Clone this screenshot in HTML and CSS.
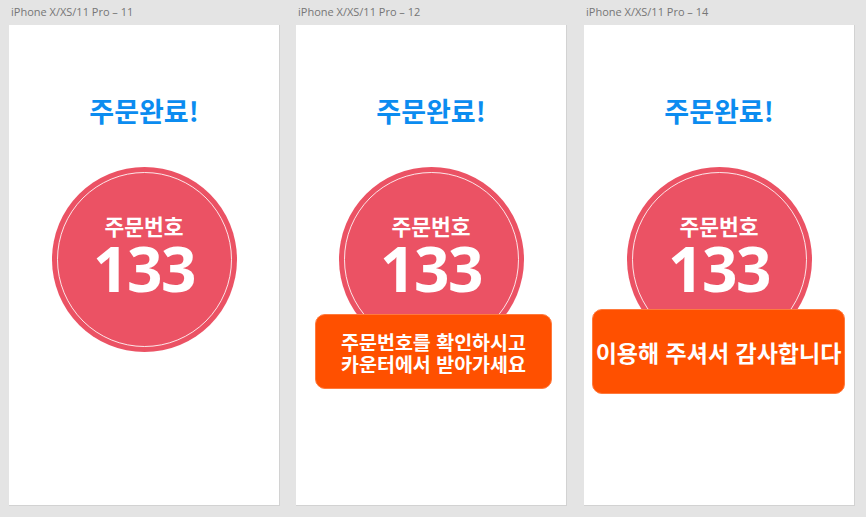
FILE: index.html
```html
<!DOCTYPE html>
<html lang="ko">
<head>
<meta charset="utf-8">
<title>주문완료</title>
<link rel="stylesheet" href="styles.css">
</head>
<body>
<div class="canvas">
  <section class="board">
    <div class="board-label">iPhone X/XS/11 Pro – 11</div>
    <div class="screen">
      <h1 class="title">주문완료!</h1>
      <div class="ticket">
        <div class="ticket-label">주문번호</div>
        <div class="ticket-number">133</div>
      </div>
    </div>
  </section>
  <section class="board">
    <div class="board-label">iPhone X/XS/11 Pro – 12</div>
    <div class="screen">
      <h1 class="title">주문완료!</h1>
      <div class="ticket">
        <div class="ticket-label">주문번호</div>
        <div class="ticket-number">133</div>
      </div>
      <div class="toast toast-info">주문번호를 확인하시고<br>카운터에서 받아가세요</div>
    </div>
  </section>
  <section class="board board-last">
    <div class="board-label">iPhone X/XS/11 Pro – 14</div>
    <div class="screen">
      <h1 class="title">주문완료!</h1>
      <div class="ticket">
        <div class="ticket-label">주문번호</div>
        <div class="ticket-number">133</div>
      </div>
      <div class="toast toast-thanks">이용해 주셔서 감사합니다</div>
    </div>
  </section>
</div>
</body>
</html>
```
FILE: styles.css
```css
* { box-sizing: border-box; }
html, body {
  margin: 0;
  padding: 0;
  background: #e4e4e4;
  width: 866px;
  height: 517px;
  overflow: hidden;
}
body {
  font-family: "Noto Sans CJK KR", "Noto Sans", sans-serif;
}
.canvas {
  display: flex;
  gap: 16px;
  padding-left: 9px;
  padding-top: 4px;
}
.board {
  width: 271px;
  display: flex;
  flex-direction: column;
}
.board-last {
  margin-left: 1px;
}
.board-label {
  font-family: "Open Sans", "Noto Sans", sans-serif;
  font-size: 11px;
  line-height: 16px;
  color: #767676;
  height: 21px;
  padding-left: 2px;
  white-space: nowrap;
}
.screen {
  position: relative;
  height: 481px;
  background: #fff;
  border-right: 1px solid #d2d2d2;
  border-bottom: 1px solid #d2d2d2;
  display: flex;
  flex-direction: column;
  align-items: center;
}
.title {
  margin: 70px 0 0;
  font-size: 27px;
  line-height: 32px;
  font-weight: 700;
  color: #0b8cf0;
}
.ticket {
  margin-top: 40px;
  width: 185px;
  height: 185px;
  border-radius: 50%;
  background: #eb5264;
  position: relative;
  display: flex;
  flex-direction: column;
  align-items: center;
  padding-top: 47px;
  color: #fff;
}
.ticket::before {
  content: "";
  position: absolute;
  inset: 5px;
  border-radius: 50%;
  border: 1px solid rgba(255, 255, 255, 0.85);
}
.ticket-label {
  font-size: 21.5px;
  line-height: 23px;
  font-weight: 700;
}
.ticket-number {
  font-family: "Open Sans", "Noto Sans", sans-serif;
  font-weight: 700;
  font-size: 62px;
  line-height: 62px;
  letter-spacing: -1.5px;
}
.toast {
  position: absolute;
  background: #ff5000;
  border: 1px solid #ff7a3d;
  border-radius: 10px;
  color: #fff;
  font-weight: 700;
  display: flex;
  align-items: center;
  justify-content: center;
  text-align: center;
}
.toast-info {
  left: 19px;
  top: 289px;
  width: 237px;
  height: 75px;
  font-size: 19.5px;
  line-height: 22px;
  padding-top: 2px;
}
.toast-thanks {
  left: 8px;
  top: 284px;
  width: 253px;
  height: 85px;
  font-size: 23px;
  line-height: 28px;
  white-space: nowrap;
}
```
